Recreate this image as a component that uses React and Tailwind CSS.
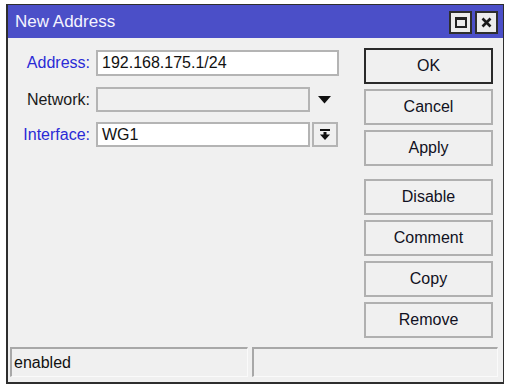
import React from 'react';

const font = { fontFamily: '"Liberation Sans", Arial, sans-serif' };

const DialogButton = ({ label, focused }) => (
    <button
        className={`h-[36px] shrink-0 w-full bg-[#f0f0f0] text-[16px] text-[#111122] ${
            focused ? 'border-2 border-[#2a2a2a]' : 'border-2 border-[#b0b0b0]'
        }`}
    >
        {label}
    </button>
);

const FieldRow = ({ label, blue, children, className = '' }) => (
    <div className={`flex items-center ${className}`}>
        <div className={`w-[82px] text-right text-[16px] ${blue ? 'text-[#2a2ad6]' : 'text-[#1a1a1a]'}`}>
            {label}
        </div>
        <div className="ml-[6px] flex items-center">{children}</div>
    </div>
);

export default function App() {
    return (
        <div className="w-[505px] h-[386px] bg-white overflow-hidden pl-[6px] pt-[4px]" style={font}>
            <div className="w-[498px] h-[380px] flex flex-col border-t border-l-2 border-b-2 border-r border-[#2e2e2e] bg-[#f0f0f0]">
                {/* title bar */}
                <div className="h-[33px] shrink-0 bg-[#4b4fc8] flex items-center justify-between pl-[7px] pr-[5px]">
                    <span className="text-[17px] text-[#f4f4ff] pt-[1px]">New Address</span>
                    <div className="flex gap-[3px] pt-[1px]">
                        <div className="w-[23px] h-[23px] bg-[#ececec] border-2 border-[#2e2e2e] flex items-center justify-center">
                            <div className="w-[12px] h-[11px] border-2 border-t-[3px] border-[#222]" />
                        </div>
                        <div className="w-[23px] h-[23px] bg-[#ececec] border-2 border-[#2e2e2e] flex items-center justify-center">
                            <svg width="11" height="11" viewBox="0 0 11 11">
                                <path d="M1.5 1.5 L9.5 9.5 M9.5 1.5 L1.5 9.5" stroke="#1a1a1a" strokeWidth="2.6" />
                            </svg>
                        </div>
                    </div>
                </div>

                {/* body */}
                <div className="flex-1 flex flex-col min-h-0">
                    <div className="flex flex-1">
                        <div className="flex-1 pt-[12px]">
                            <FieldRow label="Address:" blue>
                                <div className="w-[243px] h-[26px] bg-white border-2 border-[#b4b4b4] flex items-center pl-[4px] text-[16px] text-[#111]">
                                    192.168.175.1/24
                                </div>
                            </FieldRow>
                            <FieldRow label="Network:" className="mt-[11px]">
                                <div className="w-[214px] h-[25px] bg-[#f0f0f0] border-2 border-[#b4b4b4]" />
                                <svg className="ml-[8px]" width="13" height="8" viewBox="0 0 13 8">
                                    <polygon points="0,0 13,0 6.5,7.5" fill="#111" />
                                </svg>
                            </FieldRow>
                            <FieldRow label="Interface:" blue className="mt-[10px]">
                                <div className="w-[214px] h-[25px] bg-white border-2 border-[#b4b4b4] flex items-center pl-[4px] text-[16px] text-[#111]">
                                    WG1
                                </div>
                                <div className="ml-[2px] w-[26px] h-[25px] bg-[#f0f0f0] border-2 border-[#b4b4b4] flex items-center justify-center">
                                    <svg width="10" height="11" viewBox="0 0 10 11">
                                        <rect x="0" y="0" width="10" height="2" fill="#111" />
                                        <rect x="3.5" y="3" width="3" height="3" fill="#111" />
                                        <polygon points="0,5.5 10,5.5 5,11" fill="#111" />
                                    </svg>
                                </div>
                            </FieldRow>
                        </div>
                        <div className="w-[129px] mr-[10px] pt-[10px] flex flex-col gap-[5px]">
                            <DialogButton label="OK" focused />
                            <DialogButton label="Cancel" />
                            <DialogButton label="Apply" />
                            <div className="mt-[3px] shrink-0" />
                            <DialogButton label="Disable" />
                            <DialogButton label="Comment" />
                            <DialogButton label="Copy" />
                            <DialogButton label="Remove" />
                        </div>
                    </div>

                    {/* status bar */}
                    <div className="flex shrink-0 gap-[4px] pl-[2px] pr-[5px] mb-[5px] mt-[8px]">
                        <div className="w-[238px] h-[30px] border-t-2 border-l-2 border-[#a8a8a8] border-b border-r border-b-[#fafafa] border-r-[#fafafa] flex items-center pl-[2px] text-[16px] text-[#111]">
                            enabled
                        </div>
                        <div className="flex-1 h-[30px] border-t-2 border-l-2 border-[#a8a8a8] border-b border-r border-b-[#fafafa] border-r-[#fafafa]" />
                    </div>
                </div>
            </div>
        </div>
    );
}
